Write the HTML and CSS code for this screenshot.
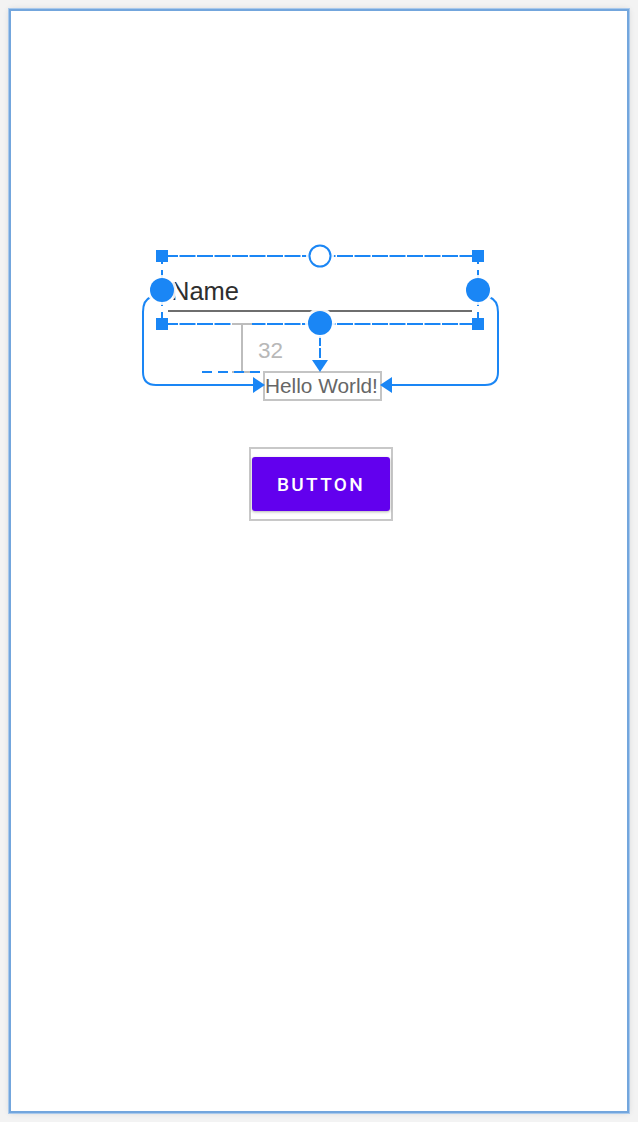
FILE: index.html
```html
<!DOCTYPE html>
<html>
<head>
<meta charset="utf-8">
<link rel="stylesheet" href="styles.css">
</head>
<body>
<div class="stage">
  <div class="device"></div>
  <div class="overlay">
    <div class="edit-text">Name</div>
    <div class="margin-label">32</div>
    <div class="text-view">Hello World!</div>
    <div class="button-bounds"><div class="btn">BUTTON</div></div>
    <svg class="constraints" width="638" height="1122" viewBox="0 0 638 1122">
      <!-- EditText underline -->
      <line x1="168" y1="311" x2="472" y2="311" stroke="#6e6e6e" stroke-width="2"/>
      <!-- selection box -->
      <g stroke="#1a86f5" stroke-width="2" fill="none" stroke-dasharray="16 1.5">
        <line x1="162" y1="256" x2="478" y2="256"/>
        <line x1="162" y1="324" x2="478" y2="324"/>
        <line x1="162" y1="256" x2="162" y2="324" stroke-dasharray="8 6"/>
        <line x1="478" y1="256" x2="478" y2="324" stroke-dasharray="8 6"/>
      </g>
      <!-- margin indicator -->
      <g stroke="#bdbdbd" stroke-width="2" fill="none">
        <line x1="232" y1="324" x2="252" y2="324"/>
        <line x1="242" y1="324" x2="242" y2="372"/>
        <line x1="232" y1="372" x2="252" y2="372"/>
      </g>
      <line x1="202" y1="372" x2="262" y2="372" stroke="#1a86f5" stroke-width="2" stroke-dasharray="10 6"/>
      <!-- left connector -->
      <path d="M151 297 Q143 300 143 312 L143 372 Q143 385 156 385 L256 385" stroke="#1a86f5" stroke-width="2" fill="none"/>
      <polygon points="253,377 265,385 253,393" fill="#1a86f5"/>
      <!-- right connector -->
      <path d="M489 297 Q498 300 498 312 L498 372 Q498 385 485 385 L388 385" stroke="#1a86f5" stroke-width="2" fill="none"/>
      <polygon points="392,377 380,385 392,393" fill="#1a86f5"/>
      <!-- bottom connector -->
      <line x1="320" y1="336" x2="320" y2="362" stroke="#1a86f5" stroke-width="2" stroke-dasharray="10 2"/>
      <polygon points="312,360 328,360 320,372" fill="#1a86f5"/>
      <!-- corner squares -->
      <g fill="#1a86f5">
        <rect x="156" y="250" width="12" height="12"/>
        <rect x="472" y="250" width="12" height="12"/>
        <rect x="156" y="318" width="12" height="12"/>
        <rect x="472" y="318" width="12" height="12"/>
      </g>
      <!-- halos -->
      <g fill="#ffffff" fill-opacity="0.9">
        <circle cx="320" cy="256" r="14"/>
        <circle cx="162" cy="290" r="15"/>
        <circle cx="478" cy="290" r="15"/>
        <circle cx="320" cy="323" r="15"/>
      </g>
      <circle cx="320" cy="256" r="10.5" fill="#ffffff" stroke="#1a86f5" stroke-width="2"/>
      <g fill="#1a86f5">
        <circle cx="162" cy="290" r="12"/>
        <circle cx="478" cy="290" r="12"/>
        <circle cx="320" cy="323" r="12"/>
      </g>
    </svg>
  </div>
</div>
</body>
</html>
```

FILE: styles.css
```css
html, body {
  margin: 0;
  padding: 0;
  background: #f3f3f3;
}
.stage {
  position: relative;
  width: 638px;
  height: 1122px;
  padding: 9px;
  box-sizing: border-box;
  background: #f3f3f3;
  font-family: Roboto, "Liberation Sans", sans-serif;
}
.device {
  width: 100%;
  height: 100%;
  box-sizing: border-box;
  background: #ffffff;
  border: 2px solid #73a6dd;
  outline: 1px solid #a9c9ec;
  box-shadow: 0 0 6px rgba(0, 0, 0, 0.12);
}
.overlay {
  position: absolute;
  left: 0;
  top: 0;
  width: 638px;
  height: 1122px;
}
.constraints {
  position: absolute;
  left: 0;
  top: 0;
}
.edit-text {
  position: absolute;
  left: 171px;
  top: 277px;
  font-family: "Liberation Sans", Arial, sans-serif;
  font-size: 25.5px;
  line-height: 28px;
  color: #2e2e2e;
}
.margin-label {
  position: absolute;
  left: 258px;
  top: 338px;
  font-family: "Liberation Sans", Arial, sans-serif;
  font-size: 22.5px;
  line-height: 26px;
  color: #b8b8b8;
}
.text-view {
  position: absolute;
  left: 263px;
  top: 371px;
  width: 119px;
  height: 30px;
  box-sizing: border-box;
  border: 2px solid #c4c4c4;
  font-family: "Liberation Sans", Arial, sans-serif;
  font-size: 20.8px;
  line-height: 26px;
  color: #666666;
  white-space: nowrap;
  overflow: hidden;
}
.button-bounds {
  position: absolute;
  left: 249px;
  top: 447px;
  width: 144px;
  height: 74px;
  box-sizing: border-box;
  border: 2px solid #c8c8c8;
  display: flex;
  align-items: center;
  justify-content: center;
}
.btn {
  width: 138px;
  height: 54px;
  background: #6200ee;
  border-radius: 3px;
  box-shadow: 0 1px 3px rgba(0, 0, 0, 0.3);
  color: #ffffff;
  font-size: 19px;
  font-weight: 500;
  letter-spacing: 2.3px;
  display: flex;
  align-items: center;
  justify-content: center;
}
```
